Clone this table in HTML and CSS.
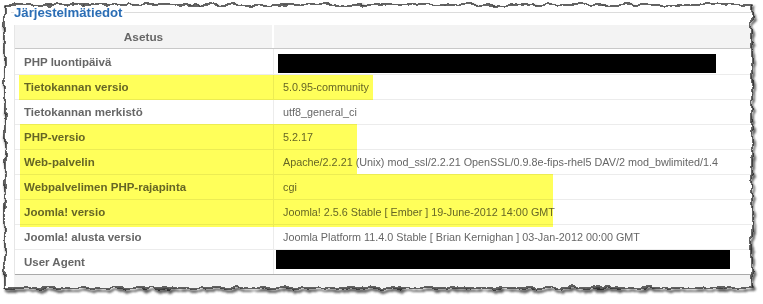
FILE: index.html
```html
<!DOCTYPE html>
<html lang="fi">
<head>
<meta charset="utf-8">
<title>Järjestelmätiedot</title>
<link rel="stylesheet" href="styles.css">
</head>
<body>
<div class="shot">
  <fieldset class="panel">
    <legend class="title">Järjestelmätiedot</legend>
    <div class="grid">
      <div class="row head">
        <div class="c1">Asetus</div>
        <div class="c2"></div>
      </div>
      <div class="row first">
        <div class="c1">PHP luontipäivä</div>
        <div class="c2"><span class="redact r1"></span></div>
      </div>
      <div class="row">
        <div class="c1">Tietokannan versio</div>
        <div class="c2">5.0.95-community</div>
      </div>
      <div class="row">
        <div class="c1">Tietokannan merkistö</div>
        <div class="c2">utf8_general_ci</div>
      </div>
      <div class="row">
        <div class="c1">PHP-versio</div>
        <div class="c2">5.2.17</div>
      </div>
      <div class="row">
        <div class="c1">Web-palvelin</div>
        <div class="c2">Apache/2.2.21 (Unix) mod_ssl/2.2.21 OpenSSL/0.9.8e-fips-rhel5 DAV/2 mod_bwlimited/1.4</div>
      </div>
      <div class="row">
        <div class="c1">Webpalvelimen PHP-rajapinta</div>
        <div class="c2">cgi</div>
      </div>
      <div class="row">
        <div class="c1">Joomla! versio</div>
        <div class="c2">Joomla! 2.5.6 Stable [ Ember ] 19-June-2012 14:00 GMT</div>
      </div>
      <div class="row">
        <div class="c1">Joomla! alusta versio</div>
        <div class="c2">Joomla Platform 11.4.0 Stable [ Brian Kernighan ] 03-Jan-2012 00:00 GMT</div>
      </div>
      <div class="row last">
        <div class="c1">User Agent</div>
        <div class="c2"><span class="redact r9"></span></div>
      </div>
    </div>
    <div class="foot"></div>
  </fieldset>

  <div class="hl hl-1"></div>
  <div class="hl hl-2"></div>
  <div class="hl hl-3"></div>

  <svg class="torn" width="763" height="304" viewBox="0 0 763 304" aria-hidden="true">
    <defs>
      <filter id="rough" filterUnits="userSpaceOnUse" x="-40" y="-40" width="843" height="384">
        <feTurbulence type="fractalNoise" baseFrequency="0.09" numOctaves="3" seed="7" result="n"/>
        <feDisplacementMap in="SourceGraphic" in2="n" scale="7" xChannelSelector="R" yChannelSelector="G"/>
      </filter>
      <filter id="soft" filterUnits="userSpaceOnUse" x="-40" y="-40" width="843" height="384">
        <feGaussianBlur stdDeviation="1.1"/>
      </filter>
      <mask id="outside" maskUnits="userSpaceOnUse" x="-40" y="-40" width="843" height="384">
        <g filter="url(#rough)">
          <path fill="#fff" fill-rule="evenodd" d="M-30 -30H793V334H-30Z M5 5H752V288H5Z"/>
        </g>
      </mask>
    </defs>
    <g filter="url(#rough)">
      <path fill="#fff" fill-rule="evenodd" d="M-30 -30H793V334H-30Z M5 5H752V288H5Z"/>
    </g>
    <g mask="url(#outside)">
      <g filter="url(#soft)">
        <g transform="translate(1.5 2.5)">
          <g filter="url(#rough)">
            <rect x="5" y="5" width="747" height="283" fill="none" stroke="#555" stroke-width="2.6"/>
          </g>
        </g>
      </g>
    </g>
    <g filter="url(#rough)">
      <rect x="5" y="5" width="747" height="283" fill="none" stroke="#111" stroke-width="1.3"/>
    </g>
  </svg>
</div>
</body>
</html>
```
FILE: styles.css
```css
html, body {
  margin: 0;
  padding: 0;
  background: #fff;
}
body {
  font-family: "Liberation Sans", Arial, sans-serif;
}
.shot {
  position: relative;
  width: 763px;
  height: 304px;
  overflow: hidden;
  background: #fff;
}
.panel {
  margin: 5px 0 0 11px;
  padding: 5px 0 0 3px;
  border: 0;
  border-top: 1px solid #dcdcdc;
  min-width: 0;
}
.title {
  padding: 0 2px 0 0;
  font-weight: bold;
  font-size: 13.2px;
  line-height: 15px;
  color: #2a6db5;
}
.grid {
  display: flex;
  flex-direction: column;
  border-left: 1px solid #e6e6e6;
}
.row {
  display: grid;
  grid-template-columns: 259px 1fr;
  height: 24px;
  border-bottom: 1px solid #ececec;
  color: #666;
}
.row .c1 {
  display: flex;
  align-items: center;
  padding-left: 9px;
  border-right: 1px solid #ececec;
  font-weight: bold;
  font-size: 11.5px;
}
.row .c2 {
  display: flex;
  align-items: center;
  padding-left: 9px;
  font-size: 10.8px;
  white-space: nowrap;
}
.row.head {
  height: 23px;
  background: #f3f3f3;
  border-bottom: 1px solid #c8c8c8;
}
.row.head .c1 {
  justify-content: center;
  padding-left: 0;
  border-right: 2px solid #fff;
  font-size: 11.8px;
}
.row.first {
  height: 25px;
}
.row.last {
  border-bottom: 1px solid #aaa;
}
.redact {
  display: block;
  background: #000;
  height: 19px;
  align-self: flex-start;
}
.r1 {
  width: 438px;
  margin: 5px 0 0 -5px;
}
.r9 {
  width: 454px;
  margin: 0 0 0 -7px;
}
.foot {
  height: 20px;
  background: #f3f3f3;
}
.hl {
  position: absolute;
  background: #ffff5a;
  mix-blend-mode: multiply;
}
.hl-1 { left: 19px; top: 75px; width: 354px; height: 25px; }
.hl-2 { left: 20px; top: 124px; width: 337px; height: 50px; }
.hl-3 { left: 20px; top: 174px; width: 533px; height: 53px; }
.torn {
  position: absolute;
  left: 0;
  top: 0;
  pointer-events: none;
}
```
